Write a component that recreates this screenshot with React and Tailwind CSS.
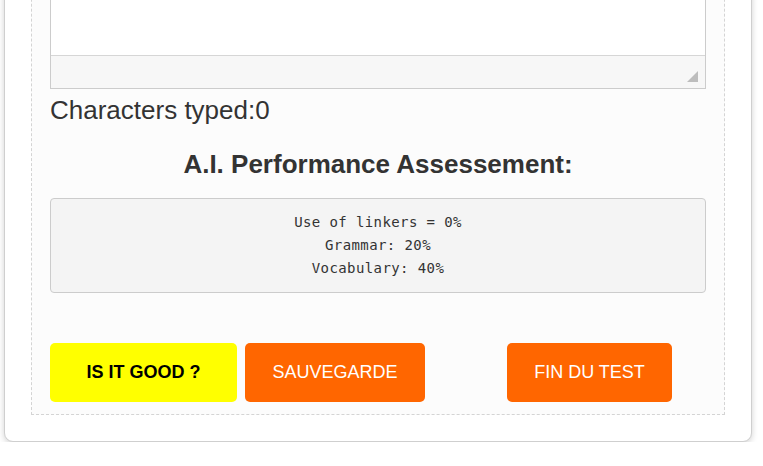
const scores = [
  'Use of linkers = 0%',
  'Grammar: 20%',
  'Vocabulary: 40%',
];

export default function App() {
  return (
    <div className="min-h-screen bg-white font-['Liberation_Sans',Arial,sans-serif] text-[#333]">
      <div className="-mt-[88px] ml-[4px] w-[748px] rounded-[9px] border border-[#cfcfcf] bg-white px-[26px] pb-[26px] pt-[26px] shadow-[0_2px_6px_rgba(0,0,0,0.18)]">
        <div className="border border-dashed border-[#d4d4d4] bg-[#fcfcfc] px-[18px] pb-[12px] pt-[18px]">
          {/* Editor */}
          <div className="relative border border-[#cccccc] bg-white">
            <div className="h-[96px]" />
            <div className="h-[33px] border-t border-[#d6d6d6] bg-[#f7f7f7]" />
            <div className="absolute bottom-[6px] right-[7px] h-0 w-0 border-b-[11px] border-l-[11px] border-b-[#bdbdbd] border-l-transparent" />
          </div>

          <p className="mt-[6px] text-[26px] leading-[30px]">Characters typed:0</p>

          <h2 className="mt-[24px] text-center text-[26px] font-bold leading-[30px]">
            A.I. Performance Assessement:
          </h2>

          <div className="mt-[19px] rounded-[4px] border border-[#cccccc] bg-[#f4f4f4] py-[12px] text-center font-['DejaVu_Sans_Mono',monospace] text-[14px] leading-[23px] tracking-[0.4px] text-[#333]">
            {scores.map((line) => (
              <div key={line}>{line}</div>
            ))}
          </div>

          <div className="mt-[50px] flex items-center">
            <button className="h-[59px] w-[187px] rounded-[5px] bg-[#ffff00] text-[18px] font-bold text-black">
              IS IT GOOD ?
            </button>
            <button className="ml-[8px] h-[59px] w-[180px] rounded-[5px] bg-[#ff6600] text-[18px] text-white">
              SAUVEGARDE
            </button>
            <button className="ml-[82px] h-[59px] w-[165px] rounded-[5px] bg-[#ff6600] text-[18px] text-white">
              FIN DU TEST
            </button>
          </div>
        </div>
      </div>
    </div>
  );
}
